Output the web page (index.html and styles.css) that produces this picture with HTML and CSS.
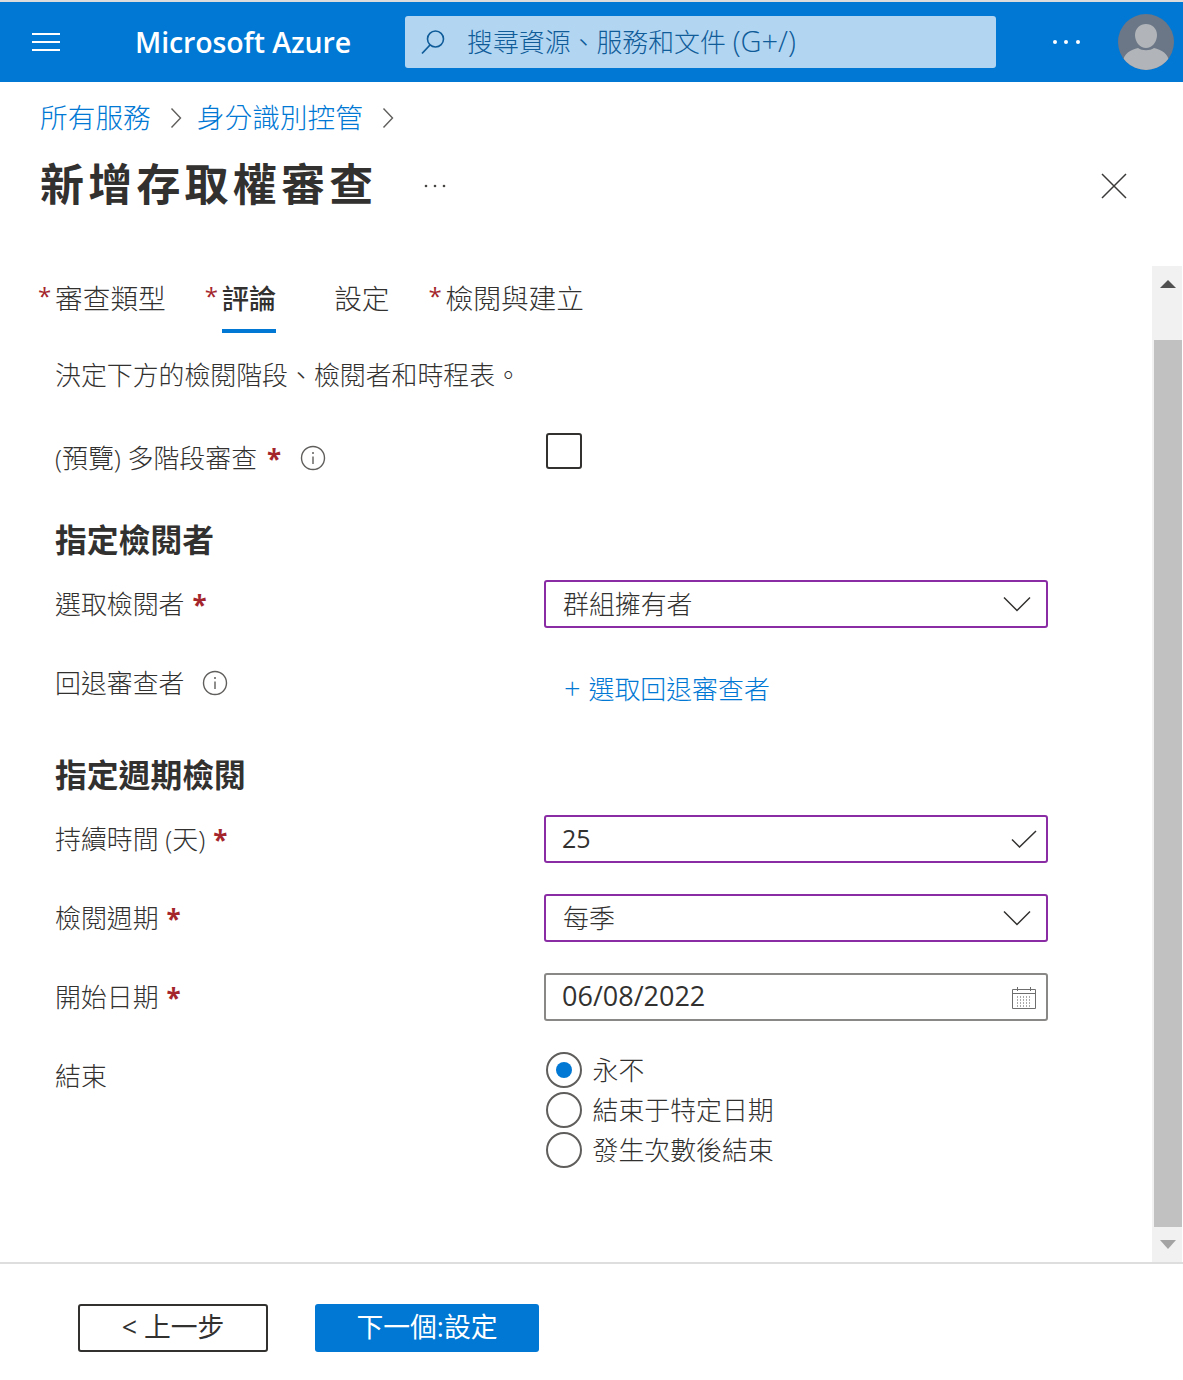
FILE: index.html
```html
<!DOCTYPE html>
<html lang="zh-Hant">
<head>
  <meta charset="utf-8">
  <title>新增存取權審查 - Microsoft Azure</title>
  <link rel="stylesheet" href="styles.css">
</head>
<body>
<div class="app">
  <header class="topbar">
    <svg class="menu-icon" width="28" height="18" viewBox="0 0 28 18"><path d="M0 1h28M0 9h28M0 17h28" stroke="#fff" stroke-width="2"/></svg>
    <div class="brand">Microsoft Azure</div>
    <div class="search">
      <svg class="search-icon" width="24" height="26" viewBox="0 0 24 26"><circle cx="14.5" cy="10" r="8" fill="none" stroke="#0f5c99" stroke-width="1.6"/><path d="M9 16 1 24.500" stroke="#0f5c99" stroke-width="1.800"/></svg>
      <span class="search-text">搜尋資源、服務和文件 <span class="search-key">(G+/)</span></span>
    </div>
    <svg class="more-icon" width="28" height="6" viewBox="0 0 28 6"><circle cx="3" cy="3" r="2" fill="#fff"/><circle cx="14" cy="3" r="2" fill="#fff"/><circle cx="26" cy="3" r="2" fill="#fff"/></svg>
    <svg class="avatar" width="56" height="56" viewBox="0 0 56 56">
      <clipPath id="avatar-clip"><circle cx="28" cy="28" r="28"/></clipPath>
      <g clip-path="url(#avatar-clip)">
        <rect width="56" height="56" fill="#6b7686"/>
        <path d="M28 10c6 0 11 4.500 11 11 0 7-5 13-11 13s-11-6-11-13c0-6.500 5-11 11-11z" fill="#b1b5ba"/>
        <path d="M5 56V49c0-10 8-13 15-15 4 3 12 3 16 0 7 2 15 5 15 15v7z" fill="#b1b5ba"/>
      </g>
    </svg>
  </header>

  <nav class="crumbs">
    <a class="crumb">所有服務</a>
    <svg class="chevron" width="12" height="22" viewBox="0 0 12 22"><path d="m1.500 1.500 9 9.500-9 9.500" fill="none" stroke="#605e5c" stroke-width="1.400"/></svg>
    <a class="crumb">身分識別控管</a>
    <svg class="chevron" width="12" height="22" viewBox="0 0 12 22"><path d="m1.500 1.500 9 9.500-9 9.500" fill="none" stroke="#605e5c" stroke-width="1.400"/></svg>
  </nav>

  <div class="title-row">
    <h1 class="title">新增存取權審查</h1>
    <svg class="title-more" width="22" height="4" viewBox="0 0 22 4"><circle cx="2" cy="2" r="1.300" fill="#484644"/><circle cx="11" cy="2" r="1.300" fill="#484644"/><circle cx="20" cy="2" r="1.300" fill="#484644"/></svg>
    <svg class="close-icon" width="26" height="26" viewBox="0 0 26 26"><path d="m1 1 24 24M25 1 1 25" stroke="#3b3a39" stroke-width="1.500"/></svg>
  </div>

  <div class="middle">
    <main class="content">
      <div class="tabs">
        <div class="tab"><span class="tab-star">*</span><span class="tab-text">審查類型</span></div>
        <div class="tab tab-active"><span class="tab-star">*</span><span class="tab-text">評論</span></div>
        <div class="tab"><span class="tab-star tab-star-empty"></span><span class="tab-text">設定</span></div>
        <div class="tab"><span class="tab-star">*</span><span class="tab-text">檢閱與建立</span></div>
      </div>

      <p class="intro">決定下方的檢閱階段、檢閱者和時程表。</p>

      <div class="field field-top field-first">
        <div class="label label-low">(預覽) 多階段審查<span class="req">*</span>
          <svg class="info" width="26" height="26" viewBox="0 0 26 26"><circle cx="13" cy="13" r="11.500" fill="none" stroke="#605e5c" stroke-width="1.400"/><path d="M13 11.500v7.500" stroke="#605e5c" stroke-width="1.400"/><circle cx="13" cy="8" r="1" fill="#605e5c"/></svg>
        </div>
        <div class="checkbox"></div>
      </div>

      <h2 class="section section-first">指定檢閱者</h2>

      <div class="field field-after-section">
        <div class="label">選取檢閱者<span class="req">*</span></div>
        <div class="box box-edited">
          <span class="cjk-value">群組擁有者</span>
          <svg class="box-icon chevron-down" width="28" height="16" viewBox="0 0 28 16"><path d="m1 1.500 13 13 13-13" fill="none" stroke="#323130" stroke-width="1.500"/></svg>
        </div>
      </div>

      <div class="field">
        <div class="label">回退審查者
          <svg class="info info-wide" width="26" height="26" viewBox="0 0 26 26"><circle cx="13" cy="13" r="11.500" fill="none" stroke="#605e5c" stroke-width="1.400"/><path d="M13 11.500v7.500" stroke="#605e5c" stroke-width="1.400"/><circle cx="13" cy="8" r="1" fill="#605e5c"/></svg>
        </div>
        <a class="add-link"><span class="plus">+</span>選取回退審查者</a>
      </div>

      <h2 class="section">指定週期檢閱</h2>

      <div class="field field-after-section">
        <div class="label">持續時間 (天)<span class="req">*</span></div>
        <div class="box box-edited">
          <span class="num-value">25</span>
          <svg class="box-icon check" width="26" height="18" viewBox="0 0 26 18"><path d="m1 9.500 7.500 7.500L25 1" fill="none" stroke="#323130" stroke-width="1.500"/></svg>
        </div>
      </div>

      <div class="field">
        <div class="label">檢閱週期<span class="req">*</span></div>
        <div class="box box-edited">
          <span class="cjk-value">每季</span>
          <svg class="box-icon chevron-down" width="28" height="16" viewBox="0 0 28 16"><path d="m1 1.500 13 13 13-13" fill="none" stroke="#323130" stroke-width="1.500"/></svg>
        </div>
      </div>

      <div class="field">
        <div class="label">開始日期<span class="req">*</span></div>
        <div class="box">
          <span class="date-value">06/08/2022</span>
          <svg class="box-icon calendar" width="24" height="23" viewBox="0 0 24 23">
            <path d="M.500 3.500h23v19H.500zM.500 7.500h23M5.500 1v4M18.500 1v4" fill="none" stroke="#6e6e6e"/>
            <path d="M5 11h14M5 14h14M5 17h14M5 20h14" stroke="#555" stroke-dasharray="1 2"/>
          </svg>
        </div>
      </div>

      <div class="field field-top">
        <div class="label label-end">結束</div>
        <div class="radios">
          <div class="radio-row"><span class="radio radio-on"></span><span class="radio-text">永不</span></div>
          <div class="radio-row"><span class="radio"></span><span class="radio-text">結束于特定日期</span></div>
          <div class="radio-row"><span class="radio"></span><span class="radio-text">發生次數後結束</span></div>
        </div>
      </div>
    </main>

    <div class="scrollbar">
      <div class="scroll-arrow">
        <svg width="16" height="8" viewBox="0 0 16 8"><path d="M8 0 16 8H0z" fill="#505050"/></svg>
      </div>
      <div class="scroll-track"><div class="scroll-thumb"></div></div>
      <div class="scroll-arrow scroll-arrow-down">
        <svg width="16" height="9" viewBox="0 0 16 9"><path d="M8 9 16 0H0z" fill="#a3a3a3"/></svg>
      </div>
    </div>
  </div>

  <footer class="footer">
    <button class="btn btn-back"><span class="btn-text">&lt; 上一步</span></button>
    <button class="btn btn-next"><span class="btn-text">下一個:設定</span></button>
  </footer>
</div>
</body>
</html>
```

FILE: styles.css
```css
* {
  box-sizing: border-box;
}
html, body {
  margin: 0;
  padding: 0;
  background: #fff;
}
body {
  font-family: "Open Sans", "Noto Sans CJK TC", sans-serif;
  font-size: 25.9px;
  font-weight: 300;
  color: #323130;
}
.app {
  display: flex;
  flex-direction: column;
  width: 1183px;
  height: 1380px;
}

/* top bar */
.topbar {
  display: flex;
  align-items: center;
  flex: none;
  height: 82px;
  background: #0078d4;
  border-top: 2px solid #dcdcdc;
}
.menu-icon {
  margin-left: 32px;
}
.brand {
  width: 270px;
  margin-left: 75px;
  color: #fff;
  font-size: 28.500px;
  font-weight: 600;
  letter-spacing: -0.1px;
  white-space: nowrap;
}
.search {
  display: flex;
  align-items: center;
  width: 591px;
  height: 52px;
  background: #b2d5f2;
  border-radius: 3px;
  color: #0f5c99;
}
.search-icon {
  margin-left: 16px;
}
.search-text {
  margin: 0 0 4px 22px;
  white-space: nowrap;
}
.search-key {
  font-size: 29px;
}
.more-icon {
  margin-left: 56px;
}
.avatar {
  margin-left: 38px;
}

/* breadcrumb + title */
.crumbs {
  display: flex;
  align-items: center;
  flex: none;
  height: 70px;
  padding-left: 40px;
}
.crumb {
  color: #0078d4;
  font-size: 27.700px;
  line-height: 70px;
}
.chevron {
  margin: 2px 15px 0 19px;
}
.title-row {
  display: flex;
  align-items: center;
  flex: none;
  height: 64px;
  padding-left: 40px;
}
.title {
  margin: 0;
  font-size: 44px;
  font-weight: 700;
  letter-spacing: 4.200px;
  line-height: 64px;
}
.title-more {
  margin: 4px 0 0 47px;
}
.close-icon {
  margin: 4px 0 0 655px;
}
.middle {
  display: flex;
  flex: 1;
  min-height: 0;
  margin-top: 50px;
}
.content {
  flex: 1;
  padding-left: 55px;
}

/* tabs */
.tabs {
  display: flex;
  gap: 40px;
  height: 67px;
  margin-left: -16px;
}
.tab {
  display: flex;
}
.tab-star {
  width: 16px;
  margin-left: -1px;
  margin-right: 1px;
  color: #a4262c;
  font-size: 24px;
  font-weight: 400;
  line-height: 60px;
}
.tab-text {
  height: 67px;
  font-size: 27.700px;
  line-height: 65px;
}
.tab-active {
  margin-right: 2px;
}
.tab-active .tab-text {
  font-size: 27.200px;
  font-weight: 500;
  border-bottom: 4px solid #0078d4;
}
.intro {
  margin: 24px 0 0;
  line-height: 36px;
}

/* form */
.field {
  display: grid;
  grid-template-columns: 489px 504px;
  align-items: center;
  margin-top: 31px;
}
.field-top {
  align-items: start;
}
.field-first {
  margin-top: 40px;
}
.field-after-section {
  margin-top: 20px;
}
.label {
  display: flex;
  align-items: center;
  line-height: 36px;
  white-space: nowrap;
}
.label-low {
  padding-top: 7px;
}
.label-low .req {
  margin-left: 10px;
}
.label-end {
  padding-top: 6px;
}
.req {
  margin-left: 8px;
  color: #a4262c;
  font-weight: 700;
}
.info {
  margin-left: 19px;
}
.info-wide {
  margin-left: 18px;
}
.checkbox {
  width: 36px;
  height: 36px;
  margin-left: 2px;
  border: 2px solid #323130;
  border-radius: 3px;
}
.section {
  margin: 48px 0 0;
  font-size: 31.800px;
  font-weight: 700;
  line-height: 40px;
}
.section-first {
  margin-top: 44px;
}
.box {
  display: flex;
  align-items: center;
  justify-content: space-between;
  height: 48px;
  padding-left: 16px;
  border: 2px solid #8a8886;
  border-radius: 3px;
}
.box-edited {
  border-color: #8a2da5;
}
.cjk-value {
  margin: 0 0 2px 1px;
}
.num-value, .date-value {
  margin-bottom: 3px;
  font-family: "Open Sans", sans-serif;
  font-size: 25px;
  font-weight: 400;
}
.date-value {
  font-size: 27px;
}
.box-icon {
  flex: none;
}
.chevron-down {
  margin-right: 15px;
}
.check {
  margin-right: 9px;
}
.calendar {
  margin-right: 10px;
}
.add-link {
  display: block;
  height: 48px;
  padding: 12px 0 0 20px;
  color: #0078d4;
  line-height: 36px;
  white-space: nowrap;
}
.plus {
  margin-right: 8px;
  font-size: 29px;
  line-height: 1;
}
.radios {
  display: flex;
  flex-direction: column;
  gap: 4px;
}
.radio-row {
  display: flex;
  align-items: center;
  height: 36px;
  padding-left: 2px;
}
.radio-text {
  margin-bottom: 3px;
}
.radio {
  position: relative;
  width: 36px;
  height: 36px;
  margin-right: 10.500px;
  border: 2px solid #605e5c;
  border-radius: 50%;
}
.radio-on::after {
  content: "";
  position: absolute;
  top: 8px;
  left: 8px;
  width: 16px;
  height: 16px;
  background: #0078d4;
  border-radius: 50%;
}

/* scrollbar */
.scrollbar {
  display: flex;
  flex-direction: column;
  flex: none;
  width: 30px;
  margin-right: 1px;
  background: #f1f1f1;
}
.scroll-arrow {
  display: flex;
  justify-content: center;
  flex: none;
  height: 74px;
  padding: 14px 0 0 2px;
}
.scroll-arrow-down {
  height: 35px;
  padding-top: 13px;
}
.scroll-track {
  flex: 1;
}
.scroll-thumb {
  height: 100%;
  margin-left: 2px;
  background: #c1c1c1;
}

/* footer */
.footer {
  display: flex;
  flex: none;
  gap: 47px;
  height: 118px;
  padding: 40px 0 0 78px;
  border-top: 2px solid #dedede;
}
.btn {
  height: 48px;
  padding: 0;
  font-family: inherit;
  font-size: 26.800px;
  font-weight: 400;
  border-radius: 3px;
  cursor: pointer;
}
.btn-text {
  position: relative;
  top: -3px;
}
.btn-back {
  width: 190px;
  background: #fff;
  color: #323130;
  border: 2px solid #323130;
}
.btn-next {
  width: 224px;
  background: #0078d4;
  color: #fff;
  border: 0;
}
```
